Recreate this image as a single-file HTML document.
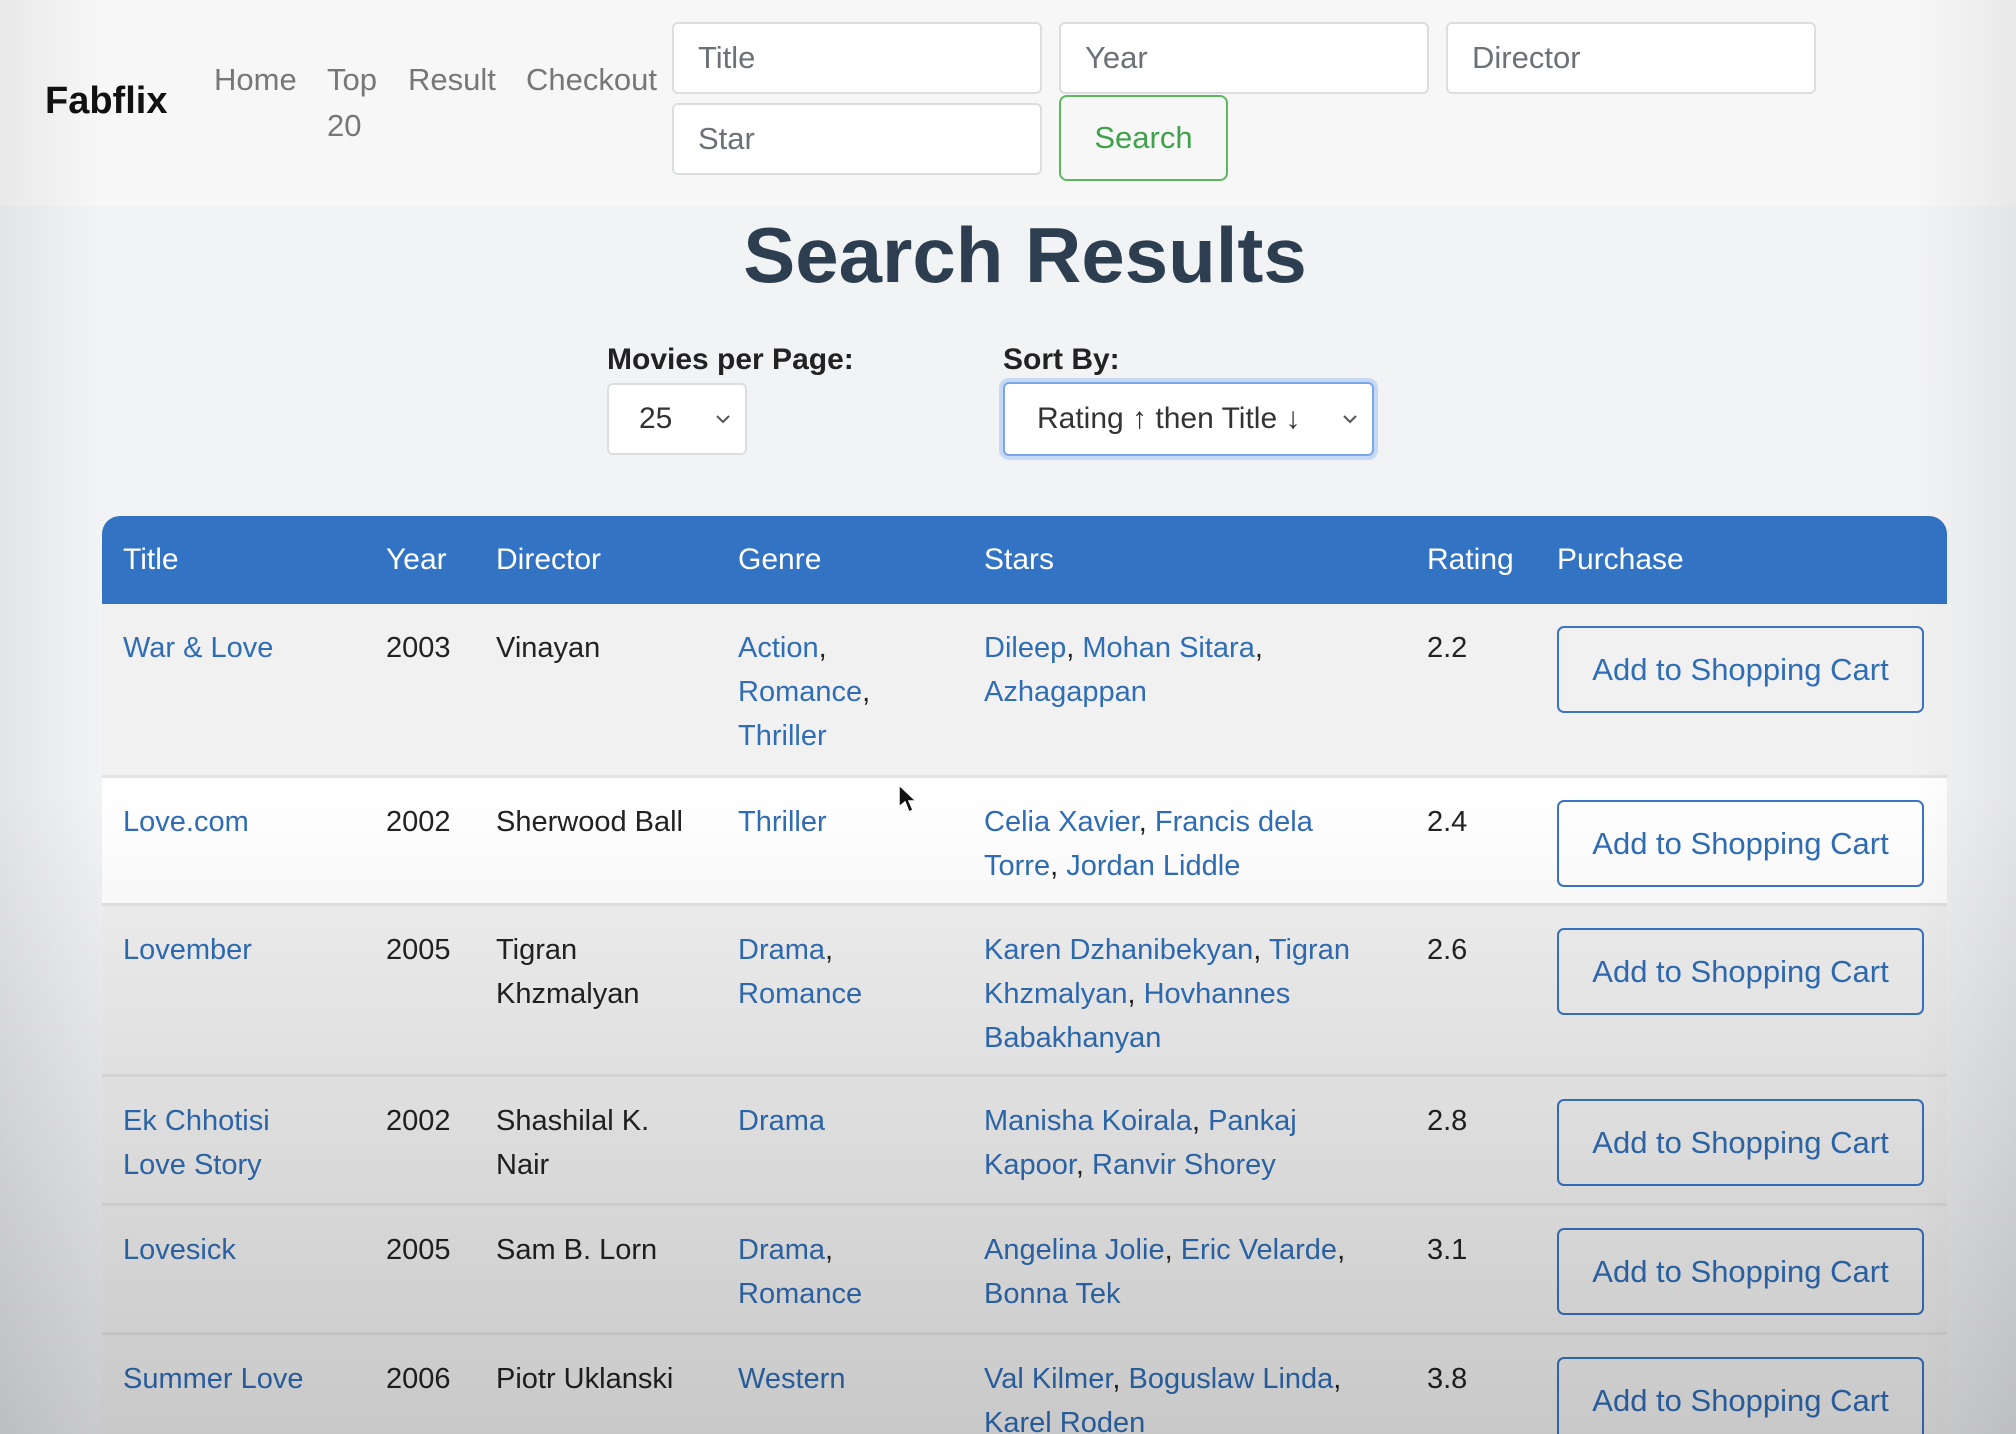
<!DOCTYPE html>
<html style="width:2016px;height:1434px;overflow:hidden"><head><meta charset="utf-8"><style>
*{box-sizing:border-box;margin:0;padding:0}
body{width:2016px;height:1434px;overflow:hidden;background:#f2f3f5;font-family:"Liberation Sans",Arial,sans-serif;position:relative}
.nav{position:absolute;left:0;top:0;width:2016px;height:206px;background:#f7f7f8}
.brand{position:absolute;left:45px;top:80px;font-size:38px;font-weight:bold;color:#111}
.lk{position:absolute;top:57px;font-size:31px;color:#777;line-height:46px}
.inp{position:absolute;background:#fff;border:2px solid #dcdde0;border-radius:6px;font-size:31px;color:#6c7077;padding-left:24px;display:flex;align-items:center}
.btn{position:absolute;left:1059px;top:95px;width:169px;height:86px;border:2px solid #5cb85c;border-radius:8px;color:#3fa24a;font-size:31px;display:flex;align-items:center;justify-content:center;background:#f7f7f8}
h1{position:absolute;left:0;width:2050px;text-align:center;top:210px;font-size:78px;color:#2c3e50;font-weight:bold}
.lab{position:absolute;top:343px;font-size:30px;font-weight:bold;color:#222}
.sel{position:absolute;background:#fff;border:2px solid #dcdde0;border-radius:6px;font-size:30px;color:#333;display:flex;align-items:center;padding-left:30px}
.sel svg{position:absolute;right:14px;top:50%;margin-top:-5px}
table{position:absolute;left:102px;top:516px;width:1845px;border-collapse:separate;border-spacing:0;table-layout:fixed;font-size:29px}
th{background:#3273c4;color:#fff;font-weight:normal;text-align:left;height:88px;padding-left:21px;font-size:30px}
th:first-child{border-top-left-radius:18px}th:last-child{border-top-right-radius:18px}
td{vertical-align:top;padding:22px 0 0 21px;line-height:44px;color:#222;border-bottom:3px solid #e4e4e4}
tr.o td{background:#f1f1f1}tr.e td{background:#fff}
a{color:#2f6db5;text-decoration:none}
.cart{display:flex;align-items:center;justify-content:center;width:367px;height:87px;border:2px solid #3a74c4;border-radius:7px;color:#2f6db5;background:transparent;font-size:31px}
.shade{position:absolute;left:0;top:0;width:2016px;height:1434px;pointer-events:none;background:linear-gradient(to bottom,rgba(0,0,0,0) 55%,rgba(0,0,0,.09) 80%,rgba(0,0,0,.17) 100%)}
.shade2{position:absolute;left:0;top:0;width:2016px;height:1434px;pointer-events:none;background:linear-gradient(to right,rgba(0,0,0,.06) 0%,rgba(0,0,0,0) 5%,rgba(0,0,0,0) 95%,rgba(0,0,0,.06) 100%)}
</style></head><body>
<div class="nav">
<div class="brand">Fabflix</div>
<div class="lk" style="left:214px">Home</div>
<div class="lk" style="left:327px">Top<br>20</div>
<div class="lk" style="left:408px">Result</div>
<div class="lk" style="left:526px">Checkout</div>
<div class="inp" style="left:672px;top:22px;width:370px;height:72px">Title</div>
<div class="inp" style="left:1059px;top:22px;width:370px;height:72px">Year</div>
<div class="inp" style="left:1446px;top:22px;width:370px;height:72px">Director</div>
<div class="inp" style="left:672px;top:103px;width:370px;height:72px">Star</div>
<div class="btn">Search</div>
</div>
<h1>Search Results</h1>
<div class="lab" style="left:607px">Movies per Page:</div>
<div class="lab" style="left:1003px">Sort By:</div>
<div class="sel" style="left:607px;top:383px;width:140px;height:72px">25<svg width="16" height="10"><path d="M2 2 L8 8 L14 2" stroke="#555" stroke-width="2" fill="none"/></svg></div>
<div class="sel" style="left:1003px;top:382px;width:371px;height:74px;border:2px solid #7aa7e8;box-shadow:0 0 0 4px #c5d9f6;padding-left:32px">Rating ↑ then Title ↓<svg width="16" height="10"><path d="M2 2 L8 8 L14 2" stroke="#555" stroke-width="2" fill="none"/></svg></div>
<table>
<colgroup><col style="width:263px"><col style="width:110px"><col style="width:242px"><col style="width:246px"><col style="width:443px"><col style="width:130px"><col style="width:411px"></colgroup>
<tr><th>Title</th><th>Year</th><th>Director</th><th>Genre</th><th>Stars</th><th>Rating</th><th>Purchase</th></tr>
<tr class="o" style="height:174px"><td><a>War &amp; Love</a></td><td>2003</td><td>Vinayan</td><td><a>Action</a>,<br><a>Romance</a>,<br><a>Thriller</a></td><td><a>Dileep</a>, <a>Mohan Sitara</a>,<br><a>Azhagappan</a></td><td>2.2</td><td><div class="cart">Add to Shopping Cart</div></td></tr>
<tr class="e" style="height:128px"><td><a>Love.com</a></td><td>2002</td><td>Sherwood Ball</td><td><a>Thriller</a></td><td><a>Celia Xavier</a>, <a>Francis dela</a><br><a>Torre</a>, <a>Jordan Liddle</a></td><td>2.4</td><td><div class="cart">Add to Shopping Cart</div></td></tr>
<tr class="o" style="height:171px"><td><a>Lovember</a></td><td>2005</td><td>Tigran<br>Khzmalyan</td><td><a>Drama</a>,<br><a>Romance</a></td><td><a>Karen Dzhanibekyan</a>, <a>Tigran</a><br><a>Khzmalyan</a>, <a>Hovhannes</a><br><a>Babakhanyan</a></td><td>2.6</td><td><div class="cart">Add to Shopping Cart</div></td></tr>
<tr class="o" style="height:129px"><td><a>Ek Chhotisi</a><br><a>Love Story</a></td><td>2002</td><td>Shashilal K.<br>Nair</td><td><a>Drama</a></td><td><a>Manisha Koirala</a>, <a>Pankaj</a><br><a>Kapoor</a>, <a>Ranvir Shorey</a></td><td>2.8</td><td><div class="cart">Add to Shopping Cart</div></td></tr>
<tr class="o" style="height:129px"><td><a>Lovesick</a></td><td>2005</td><td>Sam B. Lorn</td><td><a>Drama</a>,<br><a>Romance</a></td><td><a>Angelina Jolie</a>, <a>Eric Velarde</a>,<br><a>Bonna Tek</a></td><td>3.1</td><td><div class="cart">Add to Shopping Cart</div></td></tr>
<tr class="o" style="height:129px"><td><a>Summer Love</a></td><td>2006</td><td>Piotr Uklanski</td><td><a>Western</a></td><td><a>Val Kilmer</a>, <a>Boguslaw Linda</a>,<br><a>Karel Roden</a></td><td>3.8</td><td><div class="cart">Add to Shopping Cart</div></td></tr>
</table>
<svg style="position:absolute;left:897px;top:783px" width="22" height="32"><path d="M2 2 L2 24 L8 19 L12 29 L16 27 L12 18 L19 18 Z" fill="#111" stroke="#fff" stroke-width="1.5"/></svg>
<div class="shade"></div><div class="shade2"></div>
</body></html>
